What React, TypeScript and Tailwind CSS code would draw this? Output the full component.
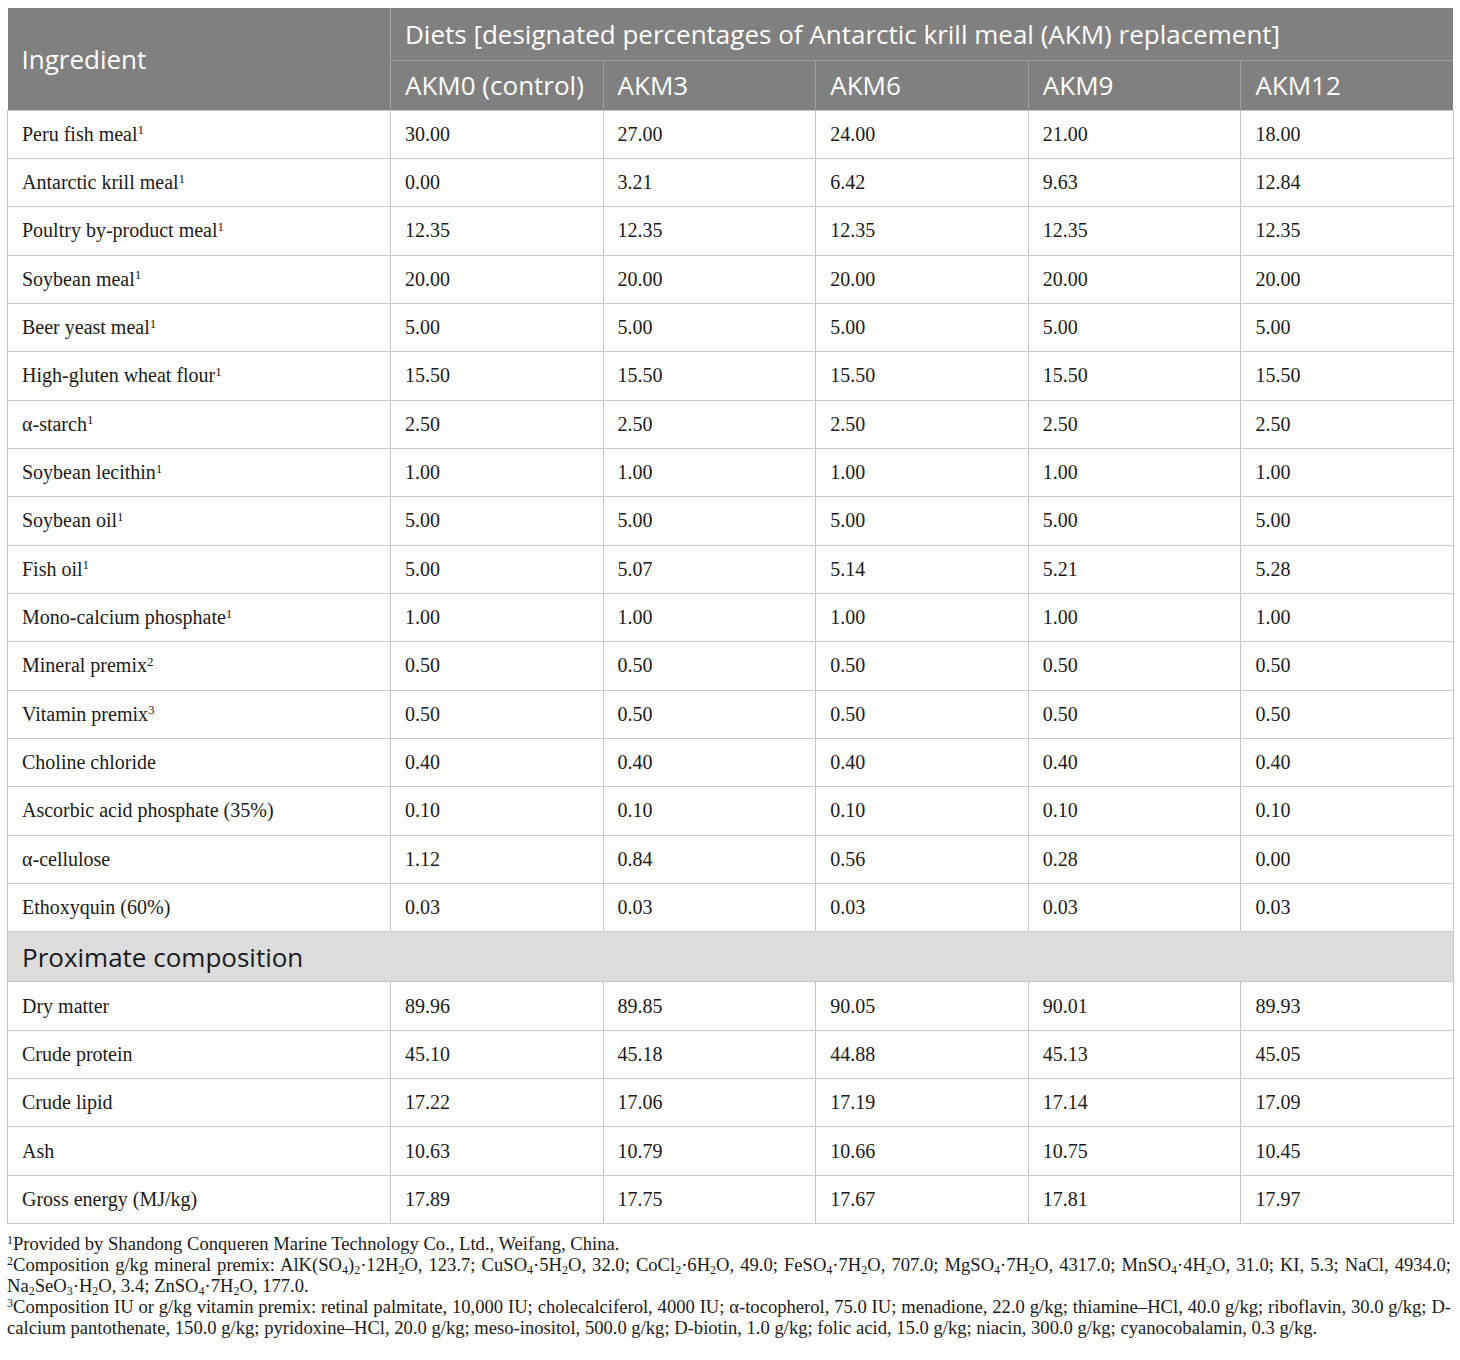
import React from "react";

type Row = { name: React.ReactNode; vals: string[] };

const S = ({ children }: { children: React.ReactNode }) => (
  <sup className="text-[13px]">{children}</sup>
);
const B = ({ children }: { children: React.ReactNode }) => (
  <sub className="text-[12px]">{children}</sub>
);

const rows: Row[] = [
  { name: <>Peru fish meal<S>1</S></>, vals: ["30.00", "27.00", "24.00", "21.00", "18.00"] },
  { name: <>Antarctic krill meal<S>1</S></>, vals: ["0.00", "3.21", "6.42", "9.63", "12.84"] },
  { name: <>Poultry by-product meal<S>1</S></>, vals: ["12.35", "12.35", "12.35", "12.35", "12.35"] },
  { name: <>Soybean meal<S>1</S></>, vals: ["20.00", "20.00", "20.00", "20.00", "20.00"] },
  { name: <>Beer yeast meal<S>1</S></>, vals: ["5.00", "5.00", "5.00", "5.00", "5.00"] },
  { name: <>High-gluten wheat flour<S>1</S></>, vals: ["15.50", "15.50", "15.50", "15.50", "15.50"] },
  { name: <>α-starch<S>1</S></>, vals: ["2.50", "2.50", "2.50", "2.50", "2.50"] },
  { name: <>Soybean lecithin<S>1</S></>, vals: ["1.00", "1.00", "1.00", "1.00", "1.00"] },
  { name: <>Soybean oil<S>1</S></>, vals: ["5.00", "5.00", "5.00", "5.00", "5.00"] },
  { name: <>Fish oil<S>1</S></>, vals: ["5.00", "5.07", "5.14", "5.21", "5.28"] },
  { name: <>Mono-calcium phosphate<S>1</S></>, vals: ["1.00", "1.00", "1.00", "1.00", "1.00"] },
  { name: <>Mineral premix<S>2</S></>, vals: ["0.50", "0.50", "0.50", "0.50", "0.50"] },
  { name: <>Vitamin premix<S>3</S></>, vals: ["0.50", "0.50", "0.50", "0.50", "0.50"] },
  { name: <>Choline chloride</>, vals: ["0.40", "0.40", "0.40", "0.40", "0.40"] },
  { name: <>Ascorbic acid phosphate (35%)</>, vals: ["0.10", "0.10", "0.10", "0.10", "0.10"] },
  { name: <>α-cellulose</>, vals: ["1.12", "0.84", "0.56", "0.28", "0.00"] },
  { name: <>Ethoxyquin (60%)</>, vals: ["0.03", "0.03", "0.03", "0.03", "0.03"] },
];

const prox: Row[] = [
  { name: "Dry matter", vals: ["89.96", "89.85", "90.05", "90.01", "89.93"] },
  { name: "Crude protein", vals: ["45.10", "45.18", "44.88", "45.13", "45.05"] },
  { name: "Crude lipid", vals: ["17.22", "17.06", "17.19", "17.14", "17.09"] },
  { name: "Ash", vals: ["10.63", "10.79", "10.66", "10.75", "10.45"] },
  { name: "Gross energy (MJ/kg)", vals: ["17.89", "17.75", "17.67", "17.81", "17.97"] },
];

const td = "border border-[#c8c8c8] pl-[14px] pr-2 h-[48.35px] align-middle";

function BodyRow({ r }: { r: Row }) {
  return (
    <tr>
      <td className={td}>{r.name}</td>
      {r.vals.map((v, i) => (
        <td key={i} className={td}>{v}</td>
      ))}
    </tr>
  );
}

const heads = ["AKM0 (control)", "AKM3", "AKM6", "AKM9", "AKM12"];

export default function App() {
  return (
    <div className="bg-white w-[1460px] min-h-[1360px] pt-[8px] px-[7px] text-[#1a1a1a]">
      <table className="w-[1446px] table-fixed border-collapse text-[20px] leading-tight font-['Liberation_Serif','Times_New_Roman',serif]">
        <colgroup>
          <col className="w-[383px]" />
          <col className="w-[212.6px]" />
          <col className="w-[212.6px]" />
          <col className="w-[212.6px]" />
          <col className="w-[212.6px]" />
          <col className="w-[212.6px]" />
        </colgroup>
        <thead className="bg-[#808080] text-white text-[26px] font-['Open_Sans','Noto_Sans',sans-serif]">
          <tr>
            <th
              rowSpan={2}
              className="font-normal text-left pl-[14px] border-r border-[#a8a8a8] align-middle"
            >
              Ingredient
            </th>
            <th colSpan={5} className="font-normal text-left pl-[14px] h-[52px] border-b border-[#a0a0a0]">
              Diets [designated percentages of Antarctic krill meal (AKM) replacement]
            </th>
          </tr>
          <tr>
            {heads.map((h, i) => (
              <th
                key={h}
                className={i < 4 ? "font-normal text-left pl-[14px] h-[50px] border-r border-[#a0a0a0]" : "font-normal text-left pl-[14px] h-[50px]"}
              >
                {h}
              </th>
            ))}
          </tr>
        </thead>
        <tbody>
          {rows.map((r, i) => (
            <BodyRow key={i} r={r} />
          ))}
          <tr>
            <td
              colSpan={6}
              className="bg-[#dcdcdc] border border-[#c8c8c8] pl-[14px] h-[50px] text-[26px] text-[#1a1a1a] font-['Open_Sans','Noto_Sans',sans-serif]"
            >
              Proximate composition
            </td>
          </tr>
          {prox.map((r, i) => (
            <BodyRow key={i} r={r} />
          ))}
        </tbody>
      </table>
      <div className="mt-[9px] w-[1444px] text-[18.6px] leading-[21px] text-justify text-[#1a1a1a] font-['Liberation_Serif','Times_New_Roman',serif]">
        <p>
          <sup className="text-[12px]">1</sup>Provided by Shandong Conqueren Marine Technology Co., Ltd., Weifang, China.
        </p>
        <p>
          <sup className="text-[12px]">2</sup>Composition g/kg mineral premix: AlK(SO<B>4</B>)<B>2</B>·12H<B>2</B>O, 123.7; CuSO<B>4</B>·5H<B>2</B>O, 32.0; CoCl<B>2</B>·6H<B>2</B>O, 49.0; FeSO<B>4</B>·7H<B>2</B>O, 707.0; MgSO<B>4</B>·7H<B>2</B>O, 4317.0; MnSO<B>4</B>·4H<B>2</B>O, 31.0; KI, 5.3; NaCl, 4934.0; Na<B>2</B>SeO<B>3</B>·H<B>2</B>O, 3.4; ZnSO<B>4</B>·7H<B>2</B>O, 177.0.
        </p>
        <p>
          <sup className="text-[12px]">3</sup>Composition IU or g/kg vitamin premix: retinal palmitate, 10,000 IU; cholecalciferol, 4000 IU; α-tocopherol, 75.0 IU; menadione, 22.0 g/kg; thiamine–HCl, 40.0 g/kg; riboflavin, 30.0 g/kg; D-calcium pantothenate, 150.0 g/kg; pyridoxine–HCl, 20.0 g/kg; meso-inositol, 500.0 g/kg; D-biotin, 1.0 g/kg; folic acid, 15.0 g/kg; niacin, 300.0 g/kg; cyanocobalamin, 0.3 g/kg.
        </p>
      </div>
    </div>
  );
}
